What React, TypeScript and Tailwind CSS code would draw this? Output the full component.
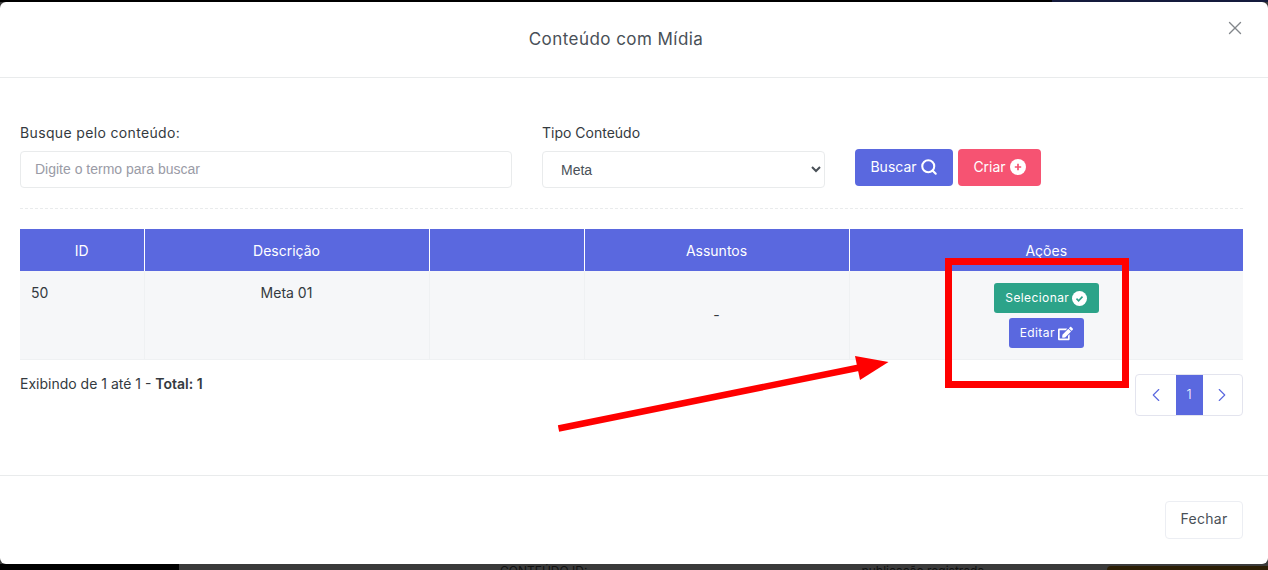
import { ChevronLeft, ChevronRight, Search, X } from "lucide-react";
import { FaEdit } from "react-icons/fa";

const columns = [
  { label: "ID", width: "w-[124px]" },
  { label: "Descrição", width: "w-[285px]" },
  { label: "", width: "w-[155px]" },
  { label: "Assuntos", width: "w-[265px]" },
  { label: "Ações", width: "" },
];

function CheckDisc() {
  return (
    <svg width="15" height="15" viewBox="0 0 16 16">
      <circle cx="8" cy="8" r="8" fill="#fff" />
      <path d="M4.8 8.2l2.2 2.2 4.2-4.4" fill="none" stroke="#2ca389" strokeWidth="1.7" />
    </svg>
  );
}

function PlusDisc() {
  return (
    <svg width="16" height="16" viewBox="0 0 16 16">
      <circle cx="8" cy="8" r="8" fill="#fff" />
      <path d="M8 4.8v6.4M4.8 8h6.4" fill="none" stroke="#f65372" strokeWidth="1.7" />
    </svg>
  );
}

export default function App() {
  return (
    <div className="relative flex h-[570px] w-[1268px] flex-col overflow-hidden bg-[#3a3a3a] font-['Inter',sans-serif] text-[14px] text-[#3f4254]">
      <div className="flex h-[2px] shrink-0">
        <div className="w-[1052px] bg-black" />
        <div className="flex-1 bg-[#141a3c]" />
      </div>

      <div className="flex h-[562px] shrink-0 flex-col rounded-[6px] bg-white">
        <header className="relative flex h-[76px] shrink-0 items-center justify-center border-b border-[#e9ebec] pr-[36px]">
          <h5 className="text-[17px] tracking-[0.45px] text-[#495057]">Conteúdo com Mídia</h5>
          <button className="absolute right-[22px] top-[15px] text-[#82868b]">
            <X size={22} strokeWidth={1.5} />
          </button>
        </header>

        <main className="flex-1 pl-5 pr-[25px] pt-[46px]">
          <div className="flex items-end border-b border-dashed border-[#e9ebec] pb-5">
            <div className="flex w-[492px] flex-col">
              <label className="mb-[10px] text-[14px] leading-[17px] tracking-[0.35px] text-[#343a40]">Busque pelo conteúdo:</label>
              <input
                readOnly
                placeholder="Digite o termo para buscar"
                className="h-[37px] rounded-[4px] border border-[#e9ebec] bg-white px-[14px] pb-[2px] font-['Liberation_Sans',sans-serif] text-[14px] placeholder:text-[#9a9ba6]"
              />
            </div>
            <div className="ml-[30px] flex w-[283px] flex-col">
              <label className="mb-[10px] text-[14px] leading-[17px] text-[#343a40]">Tipo Conteúdo</label>
              <select className="h-[37px] rounded-[4px] border border-[#e9ebec] bg-white px-[14px] font-['Liberation_Sans',sans-serif] text-[14px] text-[#495057]">
                <option>Meta</option>
              </select>
            </div>
            <div className="mb-[2px] ml-[30px] flex gap-[5px]">
              <button className="flex h-[37px] w-[98px] items-center justify-center gap-[3px] rounded-[4px] bg-[#5a68df] pb-[2px] text-[14px] text-white">
                Buscar <Search size={18} strokeWidth={2.75} />
              </button>
              <button className="flex h-[37px] w-[83px] items-center justify-center gap-[4px] rounded-[4px] bg-[#f65372] pb-[2px] text-[14px] text-white">
                Criar <PlusDisc />
              </button>
            </div>
          </div>

          <table className="mt-5 w-[1223px] table-fixed border-collapse">
            <thead>
              <tr className="h-[42px] bg-[#5a68df] text-white">
                {columns.map((col) => (
                  <th key={col.label} className={`${col.width} border-r border-white text-[14px] font-normal last:border-r-0`}>
                    {col.label}
                  </th>
                ))}
              </tr>
            </thead>
            <tbody>
              <tr className="h-[88px] border-b border-[#eff1f3] bg-[#f6f7f9] text-[14px] text-[#343a40]">
                <td className="border-r border-[#eff1f3] px-[11px] pt-[11px] align-top">50</td>
                <td className="border-r border-[#eff1f3] pt-[11px] text-center align-top">Meta 01</td>
                <td className="border-r border-[#eff1f3]" />
                <td className="border-r border-[#eff1f3] text-center">-</td>
                <td className="pt-[2px]">
                  <div className="flex flex-col items-center gap-[5px]">
                    <button className="flex h-[30px] w-[105px] items-center justify-center gap-[3px] rounded-[3px] bg-[#2ca389] text-[12px] tracking-[0.4px] text-white">
                      Selecionar <CheckDisc />
                    </button>
                    <button className="flex h-[30px] w-[75px] items-center justify-center gap-[3px] rounded-[3px] bg-[#5a68df] text-[12px] tracking-[0.4px] text-white">
                      Editar <FaEdit size={15} />
                    </button>
                  </div>
                </td>
              </tr>
            </tbody>
          </table>

          <div className="flex items-start justify-between">
            <p className="mt-[14px] text-[14px] leading-[20px] text-[#343a40]">
              Exibindo de 1 até 1 - <span className="font-semibold">Total: 1</span>
            </p>
            <div className="mt-[14px] flex h-[42px] w-[108px] overflow-hidden rounded-[4px] border border-[#e3e4ee] text-[#5a68df]">
              <span className="flex flex-1 items-center justify-center">
                <ChevronLeft size={22} strokeWidth={1.25} />
              </span>
              <span className="flex w-[27px] items-center justify-center bg-[#5a68df] text-[13px] font-light text-white">1</span>
              <span className="flex flex-1 items-center justify-center">
                <ChevronRight size={22} strokeWidth={1.25} />
              </span>
            </div>
          </div>
        </main>

        <footer className="flex h-[89px] shrink-0 items-center justify-end border-t border-[#e9ebec] px-[25px]">
          <button className="h-[38px] w-[78px] rounded-[4px] border border-[#eceef3] bg-white pb-[3px] text-[14px] tracking-[0.3px] text-[#495057]">
            Fechar
          </button>
        </footer>
      </div>

      <div className="flex flex-1 overflow-hidden text-[12px] leading-[14px] text-[#111]">
        <div className="w-[179px] bg-black" />
        <div className="flex flex-1 bg-[#3a3a3a]">
          <span className="ml-[321px]">CONTEÚDO ID:</span>
          <span className="ml-[274px]">publicação registrada</span>
        </div>
        <div className="mt-[2px] w-[161px] rounded-tl-[4px] bg-[#2c1e05]" />
      </div>

      {/* red annotation drawn over the screenshot */}
      <div className="pointer-events-none absolute left-[945px] top-[258px] h-[130px] w-[184px] border-[7px] border-[#ff0000]" />
      <svg className="pointer-events-none absolute left-0 top-0" width="1268" height="570" viewBox="0 0 1268 570">
        <line x1="558.5" y1="428.5" x2="862" y2="367" stroke="#ff0000" strokeWidth="6.5" />
        <polygon points="855,356 888.5,362 860,380" fill="#ff0000" />
      </svg>
    </div>
  );
}
